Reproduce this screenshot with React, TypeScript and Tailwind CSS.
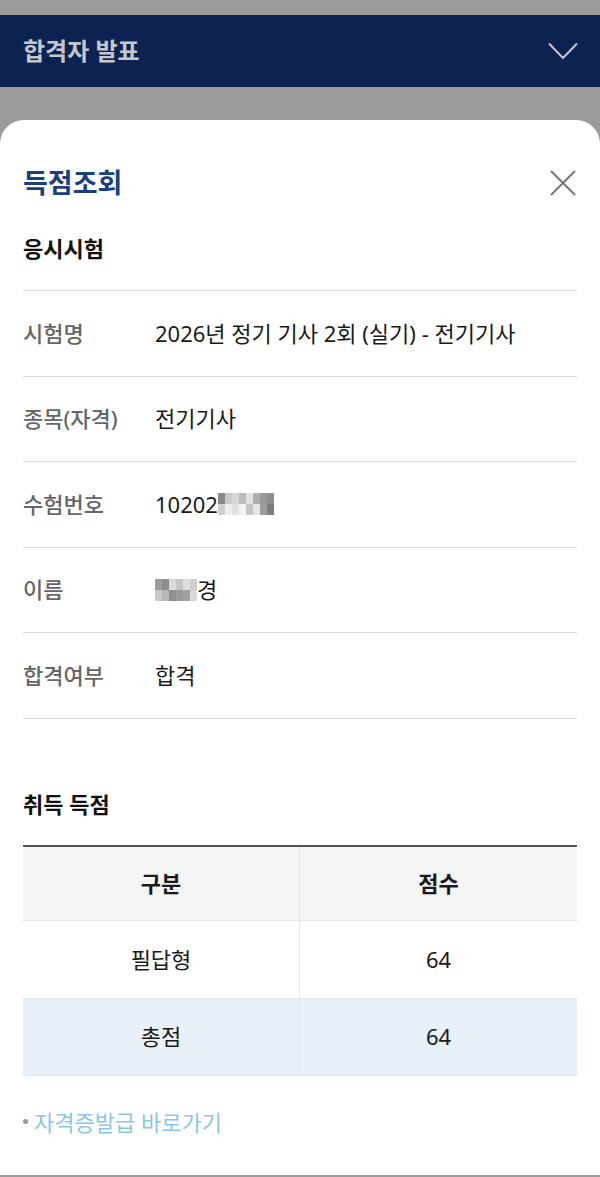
import React from "react";

const font = { fontFamily: '"Noto Sans", "Noto Sans CJK KR", sans-serif' };

const rows = [
  { label: "시험명", value: "2026년 정기 기사 2회 (실기) - 전기기사" },
  { label: "종목(자격)", value: "전기기사" },
  { label: "수험번호", value: "exam" },
  { label: "이름", value: "name" },
  { label: "합격여부", value: "합격" },
];

// blurred parts of the personal data (two rows of pixel blocks)
function Mosaic({ top, bottom }: { top: string[]; bottom: string[] }) {
  return (
    <span className="inline-flex flex-col">
      <span className="flex h-[11px]">
        {top.map((c, i) => (
          <span key={i} className="w-[7px]" style={{ background: c }} />
        ))}
      </span>
      <span className="flex h-[11px]">
        {bottom.map((c, i) => (
          <span key={i} className="w-[7px]" style={{ background: c }} />
        ))}
      </span>
    </span>
  );
}

function Value({ v }: { v: string }) {
  if (v === "exam") {
    return (
      <span className="flex items-center">
        10202
        <Mosaic
          top={["#8a8a8a", "#c9c9c9", "#d6d6d6", "#bdbdbd", "#e2e2e2", "#b0b0b0", "#9a9a9a", "#8f8f8f"]}
          bottom={["#cfcfcf", "#eeeeee", "#e2e2e2", "#f2f2f2", "#c4c4c4", "#e6e6e6", "#9c9c9c", "#7d7d7d"]}
        />
      </span>
    );
  }
  if (v === "name") {
    return (
      <span className="flex items-center">
        <Mosaic
          top={["#9c9c9c", "#8c8c8c", "#d9d9d9", "#c4c4c4", "#dedede", "#cfcfcf"]}
          bottom={["#c8c8c8", "#b8b8b8", "#8f8f8f", "#9a9a9a", "#a0a0a0", "#dadada"]}
        />
        경
      </span>
    );
  }
  return <span>{v}</span>;
}

export default function App() {
  return (
    <div className="flex min-h-[1177px] w-[600px] flex-col bg-[#9b9b9b]" style={font}>
      <div className="mt-[15px] flex h-[72px] items-center justify-between bg-[#0c2250] pl-[23px] pr-[22px]">
        <span className="text-[24px] font-bold text-[#c4c7ce]">합격자 발표</span>
        <svg width="30" height="18" viewBox="0 0 30 18" fill="none">
          <path d="M1 1.5 L15 16 L29 1.5" stroke="#c4c7ce" strokeWidth="2" />
        </svg>
      </div>

      <div className="mt-[33px] h-[1055px] rounded-t-[24px] bg-white px-[23px] pt-[45px]">
        <div className="flex h-9 items-center justify-between">
          <h1 className="text-[27px] font-bold text-[#1d3f80]">득점조회</h1>
          <svg width="30" height="30" viewBox="0 0 30 30" fill="none" className="mr-[-1px]">
            <path d="M3 3 L27 27 M27 3 L3 27" stroke="#777" strokeWidth="2" />
          </svg>
        </div>

        <h2 className="mt-[33px] text-[22px] leading-7 font-bold text-[#111]">응시시험</h2>

        <div className="mt-[28px] border-t border-[#dedede]">
          {rows.map((r) => (
            <div key={r.label} className="flex h-[85.5px] items-center border-b border-[#dedede] text-[22px]">
              <span className="w-[132px] font-medium text-[#666]">{r.label}</span>
              <span className="text-[#1a1a1a]">
                <Value v={r.value} />
              </span>
            </div>
          ))}
        </div>

        <h2 className="mt-[71px] text-[22px] leading-7 font-bold text-[#111]">취득 득점</h2>

        <div className="mt-[27px] border-t-2 border-[#555] text-[22px] text-[#1a1a1a]">
          <div className="grid h-[74px] grid-cols-2 border-b border-[#e6e6e6] bg-[#f4f4f4] font-bold">
            <div className="flex items-center justify-center border-r border-[#e3e3e3]">구분</div>
            <div className="flex items-center justify-center">점수</div>
          </div>
          <div className="grid h-[78px] grid-cols-2 border-b border-[#e6e6e6]">
            <div className="flex items-center justify-center border-r border-[#e3e3e3]">필답형</div>
            <div className="flex items-center justify-center">64</div>
          </div>
          <div className="grid h-[77px] grid-cols-2 border-b border-[#e6e6e6] bg-[#e8f1fa]">
            <div className="flex items-center justify-center border-r border-[#e3e3e3]">총점</div>
            <div className="flex items-center justify-center">64</div>
          </div>
        </div>

        <div className="mt-[32px] flex items-center text-[22px] leading-7">
          <span className="mr-[6px] h-[5px] w-[5px] rounded-full bg-[#999]" />
          <span className="text-[#8ac6ea]">자격증발급 바로가기</span>
        </div>
      </div>
    </div>
  );
}
